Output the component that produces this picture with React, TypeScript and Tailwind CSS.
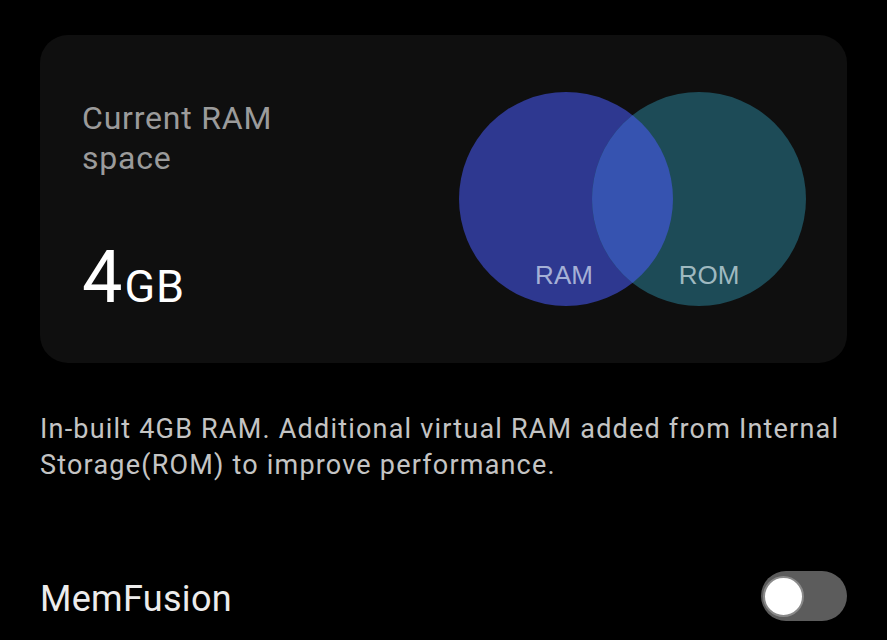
import React, { useState } from 'react';

const Venn: React.FC = () => (
  <svg width="348" height="216" viewBox="0 0 348 216" className="shrink-0">
    <defs>
      <clipPath id="ramClip">
        <circle cx="107" cy="108" r="107" />
      </clipPath>
    </defs>
    <circle cx="107" cy="108" r="107" fill="#2e3890" />
    <circle cx="240" cy="108" r="107" fill="#1d4b57" />
    <circle cx="240" cy="108" r="107" fill="#3653b0" clipPath="url(#ramClip)" />
    <text
      x="105"
      y="193"
      textAnchor="middle"
      fontSize="26"
      fill="#a5b0d6"
      fontFamily="'Liberation Sans', Arial, sans-serif"
    >
      RAM
    </text>
    <text
      x="250"
      y="193"
      textAnchor="middle"
      fontSize="26"
      fill="#9fb9c0"
      fontFamily="'Liberation Sans', Arial, sans-serif"
    >
      ROM
    </text>
  </svg>
);

const App: React.FC = () => {
  const [enabled, setEnabled] = useState(false);

  return (
    <div className="min-h-screen w-full bg-black px-10 pt-[35px] font-['Roboto',sans-serif] overflow-hidden">
      <div className="flex h-[328px] items-center justify-between rounded-[28px] bg-[#0f0f0f] pl-[42px] pr-[40px]">
        <div className="flex h-full flex-col pt-[63px]">
          <div className="text-[32px] leading-[40px] tracking-[0.8px] text-[#9b9b9b]">
            Current RAM
            <br />
            space
          </div>
          <div className="mt-[64px] flex items-baseline text-white">
            <span className="text-[72px] leading-none">4</span>
            <span className="ml-[2px] text-[45px] leading-none tracking-[1px]">GB</span>
          </div>
        </div>
        <Venn />
      </div>

      <p className="mt-[48px] text-[27px] leading-[36px] tracking-[1.2px] text-[#c4c4c4]">
        In-built 4GB RAM. Additional virtual RAM added from Internal Storage(ROM) to improve performance.
      </p>

      <div className="mt-[88px] flex items-center justify-between">
        <span className="pt-[6px] text-[36px] leading-[44px] tracking-[0.3px] text-[#ececec]">MemFusion</span>
        <button
          onClick={() => setEnabled(!enabled)}
          className={`flex h-[50px] w-[86px] items-center rounded-full px-[2px] ${
            enabled ? 'justify-end bg-[#2f6fe0]' : 'justify-start bg-[#5c5c5c]'
          }`}
        >
          <span className="h-[41px] w-[41px] rounded-full border-2 border-[#8a8a8a] bg-white" />
        </button>
      </div>
    </div>
  );
};

export default App;
